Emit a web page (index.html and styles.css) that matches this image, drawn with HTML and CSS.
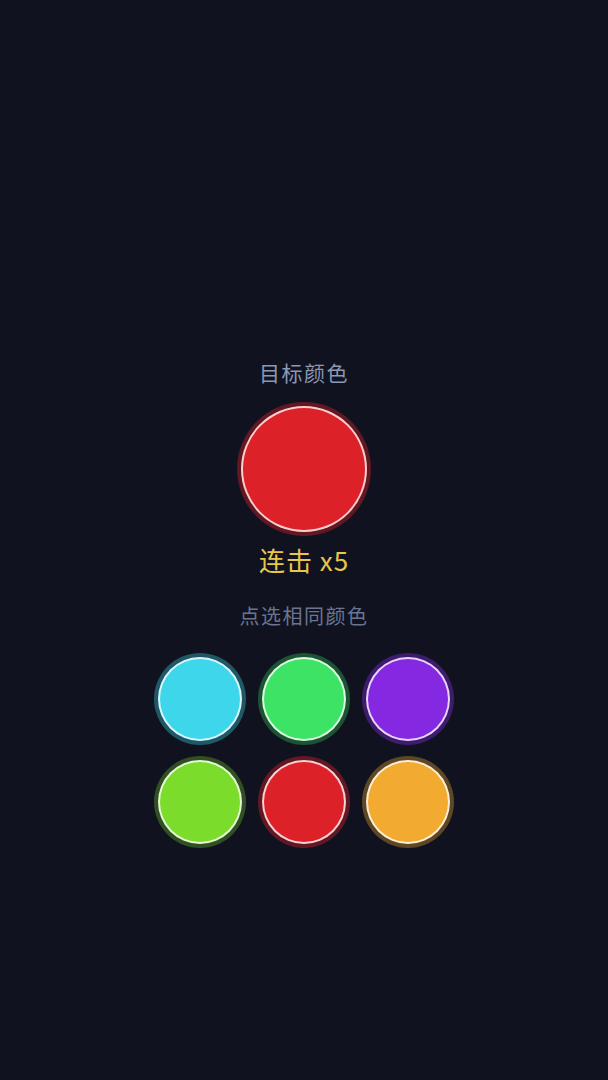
FILE: index.html
```html
<!DOCTYPE html>
<html lang="zh">

<head>
    <meta charset="UTF-8">
    <meta name="viewport" content="width=device-width, initial-scale=1.0">
    <title>颜色匹配</title>
    <link rel="stylesheet" href="styles.css">
</head>

<body>
    <main class="juego">
        <p class="etiqueta">目标颜色</p>
        <div class="objetivo rojo"></div>
        <p class="combo">连击 x5</p>
        <p class="pista">点选相同颜色</p>
        <div class="opciones">
            <button class="bola cian"></button>
            <button class="bola verde"></button>
            <button class="bola morado"></button>
            <button class="bola lima"></button>
            <button class="bola rojo"></button>
            <button class="bola naranja"></button>
        </div>
    </main>
</body>

</html>
```

FILE: styles.css
```css
body {
    margin: 0;
    background-color: #10131f;
    font-family: "Noto Sans CJK SC", "Noto Sans", sans-serif;
}

.juego {
    min-height: 1080px;
    box-sizing: border-box;
    padding-top: 358px;
    display: flex;
    flex-direction: column;
    align-items: center;
}

p {
    margin: 0;
}

.etiqueta {
    font-size: 21px;
    line-height: 28px;
    color: #8b98b6;
    letter-spacing: 1.5px;
}

.objetivo {
    width: 126px;
    height: 126px;
    margin-top: 20px;
    box-sizing: border-box;
    border-radius: 50%;
    border: 2px solid rgba(255, 235, 235, 0.85);
    background-color: var(--c);
    box-shadow: 0 0 0 4px var(--halo);
}

.combo {
    margin-top: 12px;
    font-size: 26px;
    line-height: 32px;
    color: #e8c64c;
    letter-spacing: 1px;
}

.pista {
    margin-top: 26px;
    font-size: 20px;
    line-height: 28px;
    color: #6b7591;
    letter-spacing: 1.5px;
}

.opciones {
    margin-top: 27px;
    display: grid;
    grid-template-columns: repeat(3, 84px);
    column-gap: 20px;
    row-gap: 19px;
}

.bola {
    width: 84px;
    height: 84px;
    padding: 0;
    box-sizing: border-box;
    border-radius: 50%;
    border: 2px solid rgba(255, 255, 255, 0.8);
    background-color: var(--c);
    box-shadow: 0 0 0 4px var(--halo);
    cursor: pointer;
}

.rojo {
    --c: #dc2129;
    --halo: rgba(220, 33, 41, 0.4);
}

.cian {
    --c: #3dd6ea;
    --halo: rgba(61, 214, 234, 0.35);
}

.verde {
    --c: #3ce364;
    --halo: rgba(60, 227, 100, 0.3);
}

.morado {
    --c: #8428e2;
    --halo: rgba(132, 40, 226, 0.4);
}

.lima {
    --c: #7cdc2c;
    --halo: rgba(124, 220, 44, 0.3);
}

.naranja {
    --c: #f2aa30;
    --halo: rgba(242, 170, 48, 0.35);
}
```
